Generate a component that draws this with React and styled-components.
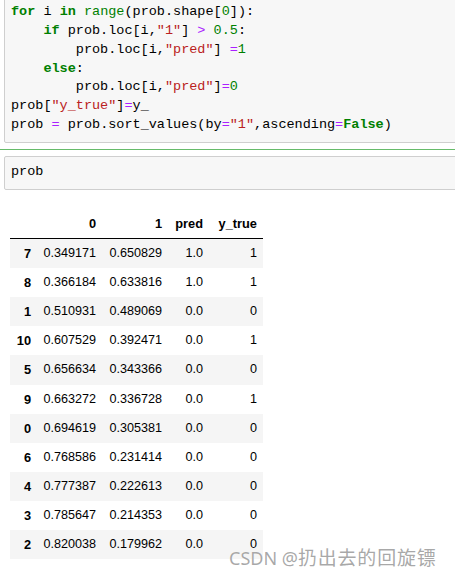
import React from 'react';
import styled, { createGlobalStyle } from 'styled-components';

const GlobalStyle = createGlobalStyle`
	html, body {
		margin: 0;
		padding: 0;
		background: #fff;
		overflow: hidden;
	}
`;

const Page = styled.div`
	position: relative;
	width: 470px;
	height: 577px;
	overflow: hidden;
`;

const InputBox = styled.div`
	margin-left: 4px;
	border: 1px solid #cfcfcf;
	border-radius: 2px;
	background: #f7f7f7;
	padding: ${(p) => p.$pad || '7px'} 6px;
	font-family: "Liberation Mono", "DejaVu Sans Mono", monospace;
	font-size: 13.5px;
	line-height: 18.85px;
	color: #000;
	white-space: pre;
`;

const CodeCell = styled(InputBox)`
	margin-top: -5px;
`;

const SelectedCell = styled.div`
	margin-top: 6px;
	border-top: 1px solid #66bb6a;
	padding-top: 6px;
`;

const tokenColors = {
	kw: '#008000',
	bi: '#008000',
	num: '#008000',
	str: '#ba2121',
	op: '#aa22ff',
};

const Tok = styled.span`
	color: ${(p) => tokenColors[p.$k]};
	font-weight: ${(p) => (p.$k === 'kw' ? 700 : 400)};
`;

const Output = styled.div`
	margin: 19px 0 0 10px;
`;

const Table = styled.table`
	border-collapse: collapse;
	border-spacing: 0;
	table-layout: fixed;
	width: 253px;
	font-family: "Liberation Sans", Arial, sans-serif;
	color: #000;

	thead th {
		border-bottom: 1px solid #000;
	}

	tbody tr:nth-child(odd) {
		background: #f5f5f5;
	}
`;

const Th = styled.th`
	font-size: 12.8px;
	font-weight: 700;
	text-align: right;
	padding: 6px 6px 6px 0;
	line-height: 17.14px;
	vertical-align: middle;
	white-space: nowrap;
`;

const Td = styled.td`
	font-size: 12.6px;
	text-align: right;
	padding: 6px 6px 6px 0;
	line-height: 17.14px;
	vertical-align: middle;
	white-space: nowrap;
`;

const Watermark = styled.div`
	position: absolute;
	left: 229px;
	top: 545px;
	font-family: "Noto Sans", "Noto Sans CJK SC", sans-serif;
	font-size: 18px;
	line-height: 24px;
	color: rgba(140, 140, 140, 0.75);
	text-shadow: 0 0 1px rgba(255, 255, 255, 0.9);
	white-space: nowrap;
`;

const Cjk = styled.span`
	font-family: "Noto Sans CJK SC", sans-serif;
	font-size: 19px;
	letter-spacing: 0.8px;
`;

const rows = [
	['7', '0.349171', '0.650829', '1.0', '1'],
	['8', '0.366184', '0.633816', '1.0', '1'],
	['1', '0.510931', '0.489069', '0.0', '0'],
	['10', '0.607529', '0.392471', '0.0', '1'],
	['5', '0.656634', '0.343366', '0.0', '0'],
	['9', '0.663272', '0.336728', '0.0', '1'],
	['0', '0.694619', '0.305381', '0.0', '0'],
	['6', '0.768586', '0.231414', '0.0', '0'],
	['4', '0.777387', '0.222613', '0.0', '0'],
	['3', '0.785647', '0.214353', '0.0', '0'],
	['2', '0.820038', '0.179962', '0.0', '0'],
];

const colWidths = [27, 65, 66, 41, 54];

const App = () => {
	return (
		<Page>
			<GlobalStyle />
			<CodeCell>
				<div><Tok $k="kw">for</Tok> i <Tok $k="kw">in</Tok> <Tok $k="bi">range</Tok>(prob.shape[<Tok $k="num">0</Tok>]):</div>
				<div>    <Tok $k="kw">if</Tok> prob.loc[i,<Tok $k="str">"1"</Tok>] <Tok $k="op">&gt;</Tok> <Tok $k="num">0.5</Tok>:</div>
				<div>        prob.loc[i,<Tok $k="str">"pred"</Tok>] <Tok $k="op">=</Tok><Tok $k="num">1</Tok></div>
				<div>    <Tok $k="kw">else</Tok>:</div>
				<div>        prob.loc[i,<Tok $k="str">"pred"</Tok>]<Tok $k="op">=</Tok><Tok $k="num">0</Tok></div>
				<div>prob[<Tok $k="str">"y_true"</Tok>]<Tok $k="op">=</Tok>y_</div>
				<div>prob <Tok $k="op">=</Tok> prob.sort_values(by<Tok $k="op">=</Tok><Tok $k="str">"1"</Tok>,ascending<Tok $k="op">=</Tok><Tok $k="kw">False</Tok>)</div>
			</CodeCell>
			<SelectedCell>
				<InputBox $pad="6.5px">prob</InputBox>
				<Output>
					<Table>
						<colgroup>
							{colWidths.map((w, i) => <col key={i} style={{ width: w }} />)}
						</colgroup>
						<thead>
							<tr>
								<Th></Th>
								<Th>0</Th>
								<Th>1</Th>
								<Th>pred</Th>
								<Th>y_true</Th>
							</tr>
						</thead>
						<tbody>
							{rows.map((r) => (
								<tr key={r[0]}>
									<Th>{r[0]}</Th>
									<Td>{r[1]}</Td>
									<Td>{r[2]}</Td>
									<Td>{r[3]}</Td>
									<Td>{r[4]}</Td>
								</tr>
							))}
						</tbody>
					</Table>
				</Output>
			</SelectedCell>
			<Watermark>CSDN @<Cjk>扔出去的回旋镖</Cjk></Watermark>
		</Page>
	);
};

export default App;
